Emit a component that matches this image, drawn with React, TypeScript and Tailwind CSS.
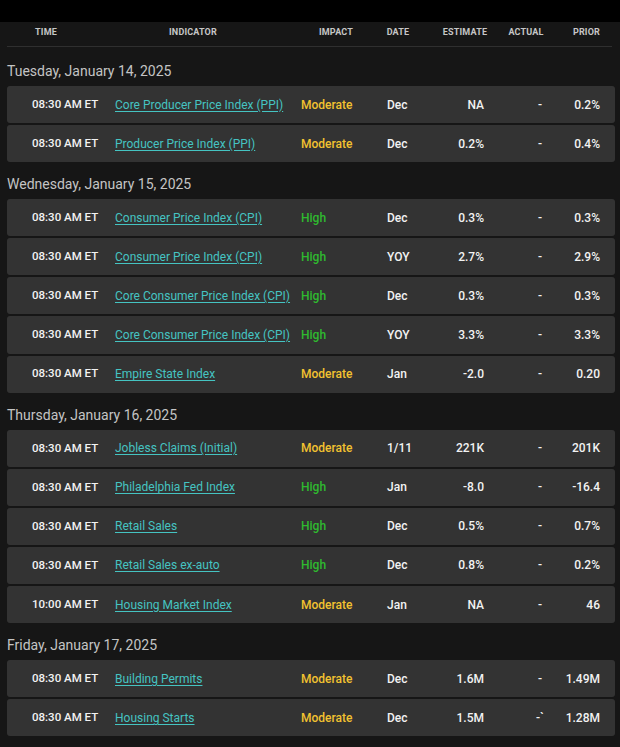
type Row = {
  time: string;
  name: string;
  impact: "High" | "Moderate";
  date: string;
  estimate: string;
  actual: string;
  prior: string;
};

const days: { label: string; rows: Row[] }[] = [
  {
    label: "Tuesday, January 14, 2025",
    rows: [
      { time: "08:30 AM ET", name: "Core Producer Price Index (PPI)", impact: "Moderate", date: "Dec", estimate: "NA", actual: "-", prior: "0.2%" },
      { time: "08:30 AM ET", name: "Producer Price Index (PPI)", impact: "Moderate", date: "Dec", estimate: "0.2%", actual: "-", prior: "0.4%" },
    ],
  },
  {
    label: "Wednesday, January 15, 2025",
    rows: [
      { time: "08:30 AM ET", name: "Consumer Price Index (CPI)", impact: "High", date: "Dec", estimate: "0.3%", actual: "-", prior: "0.3%" },
      { time: "08:30 AM ET", name: "Consumer Price Index (CPI)", impact: "High", date: "YOY", estimate: "2.7%", actual: "-", prior: "2.9%" },
      { time: "08:30 AM ET", name: "Core Consumer Price Index (CPI)", impact: "High", date: "Dec", estimate: "0.3%", actual: "-", prior: "0.3%" },
      { time: "08:30 AM ET", name: "Core Consumer Price Index (CPI)", impact: "High", date: "YOY", estimate: "3.3%", actual: "-", prior: "3.3%" },
      { time: "08:30 AM ET", name: "Empire State Index", impact: "Moderate", date: "Jan", estimate: "-2.0", actual: "-", prior: "0.20" },
    ],
  },
  {
    label: "Thursday, January 16, 2025",
    rows: [
      { time: "08:30 AM ET", name: "Jobless Claims (Initial)", impact: "Moderate", date: "1/11", estimate: "221K", actual: "-", prior: "201K" },
      { time: "08:30 AM ET", name: "Philadelphia Fed Index", impact: "High", date: "Jan", estimate: "-8.0", actual: "-", prior: "-16.4" },
      { time: "08:30 AM ET", name: "Retail Sales", impact: "High", date: "Dec", estimate: "0.5%", actual: "-", prior: "0.7%" },
      { time: "08:30 AM ET", name: "Retail Sales ex-auto", impact: "High", date: "Dec", estimate: "0.8%", actual: "-", prior: "0.2%" },
      { time: "10:00 AM ET", name: "Housing Market Index", impact: "Moderate", date: "Jan", estimate: "NA", actual: "-", prior: "46" },
    ],
  },
  {
    label: "Friday, January 17, 2025",
    rows: [
      { time: "08:30 AM ET", name: "Building Permits", impact: "Moderate", date: "Dec", estimate: "1.6M", actual: "-", prior: "1.49M" },
      { time: "08:30 AM ET", name: "Housing Starts", impact: "Moderate", date: "Dec", estimate: "1.5M", actual: "-`", prior: "1.28M" },
    ],
  },
];

export default function App() {
  return (
    <div className="min-h-[747px] w-[620px] bg-[#161616] font-['Roboto',sans-serif] text-white">
      <div className="h-[22px] bg-black" />

      <div className="ml-[7px] mr-[8px] flex h-[25px] border-b border-[#2f2f2f] pt-[5px] text-[9px] font-bold uppercase leading-[11px] tracking-[0.02em] text-[#c6c6c6]">
        <div className="w-[78px] text-center">Time</div>
        <div className="w-[216px] text-center">Indicator</div>
        <div className="w-[70px] text-center">Impact</div>
        <div className="w-[54px] text-center">Date</div>
        <div className="w-[80px] text-center">Estimate</div>
        <div className="w-[42px] text-center">Actual</div>
        <div className="w-[53px] text-right">Prior</div>
      </div>

      <div className="pt-[2px] pb-[7px]">
        {days.map((day) => (
          <section key={day.label}>
            <h2 className="px-[7px] pt-[14px] pb-[7px] text-[14px] font-normal leading-[16px] text-[#c4c4c4]">
              {day.label}
            </h2>
            <div className="ml-[7px] mr-[5px] flex flex-col gap-[2px]">
              {day.rows.map((row, i) => (
                <div
                  key={i}
                  className="flex h-[37.1px] items-center rounded-[3px] bg-[#333333] pl-[25px] pr-[15px] text-[12px] font-medium text-[#f2f2f2]"
                >
                  <div className="w-[83px] text-[11.5px]">{row.time}</div>
                  <div className="w-[186px]">
                    <a href="#" className="font-normal text-[#45c4c2] underline underline-offset-2">
                      {row.name}
                    </a>
                  </div>
                  <div
                    className={
                      row.impact === "High"
                        ? "w-[86px] text-[#2fba2f]"
                        : "w-[86px] text-[#f2c230]"
                    }
                  >
                    {row.impact}
                  </div>
                  <div className="w-[40px]">{row.date}</div>
                  <div className="w-[57px] text-right">{row.estimate}</div>
                  <div className="ml-[36px] w-[40px] text-center">{row.actual}</div>
                  <div className="flex-1 text-right">{row.prior}</div>
                </div>
              ))}
            </div>
          </section>
        ))}
      </div>
    </div>
  );
}
